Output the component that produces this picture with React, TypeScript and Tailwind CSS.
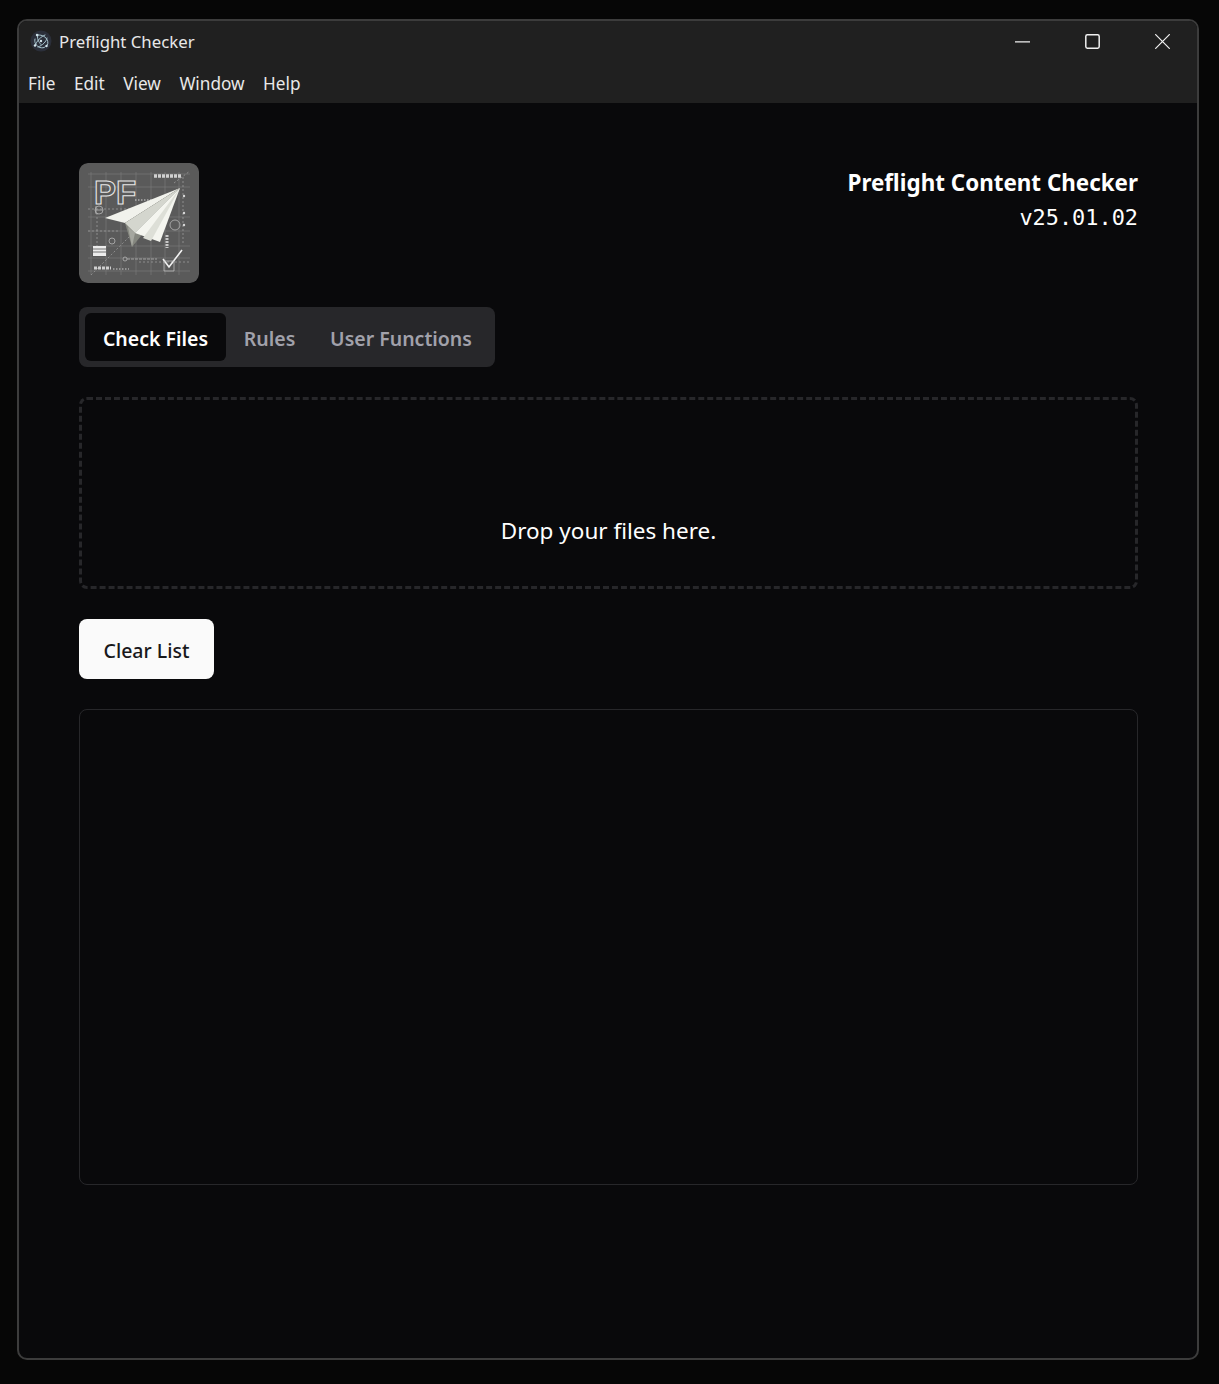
const uiFont = 'font-["Noto_Sans","Open_Sans",sans-serif]';

const menuItems = ['File', 'Edit', 'View', 'Window', 'Help'];

const AppIcon = () => (
    <svg width="22" height="22" viewBox="0 0 22 22" fill="none" className="shrink-0">
        <circle cx="11" cy="11" r="10.5" fill="#2b2f3a" />
        <g stroke="#a9c6d0" strokeWidth="1" strokeLinecap="round" fill="none">
            <path d="M7 5.5C10 4 15 6 17 9.5C18.5 12.5 18 15 16 16.5" />
            <path d="M5 9C4 12.5 6 16 10 17.5C12 18 14 18 15 17" />
            <path d="M8 4.5C6.5 8 8.5 12 11 14.5" />
            <path d="M15 5C11 6.5 6.5 11 5.5 15" />
            <path d="M17 8C16 12 13 15 8 17" />
        </g>
        <circle cx="7" cy="5" r="1.2" fill="#cfe2e8" />
        <circle cx="5" cy="15.5" r="1.2" fill="#cfe2e8" />
        <circle cx="16.5" cy="16" r="1.2" fill="#cfe2e8" />
        <circle cx="11" cy="11" r="1.2" fill="#cfe2e8" />
    </svg>
);

// hand drawn version of the blueprint paper plane logo
const Logo = () => (
    <svg width="120" height="120" viewBox="0 0 120 120" className="shrink-0 rounded-lg">
        <rect width="120" height="120" rx="9" fill="#5a5a5a" />
        <g stroke="#7c7c7c" strokeWidth="0.6">
            <path d="M9 11H111M9 24H111M9 54H111M9 68H111M9 83H111M9 95H111M9 108H111" />
            <path d="M12 9V112M27 9V112M42 9V112M57 9V112M72 9V112M86 9V112M100 9V112" />
        </g>
        <g stroke="#9a9a9a" strokeWidth="0.8" strokeDasharray="2 2">
            <path d="M9 46H60M9 68H40M60 99H111M104 14V80M18 50V88" />
            <path d="M12 112L56 68" />
            <path d="M95 20L111 8" />
        </g>
        <text
            x="15"
            y="41"
            fontFamily="Liberation Sans, sans-serif"
            fontSize="33"
            fontWeight="700"
            fill="#5a5a5a"
            stroke="#e6e6e6"
            strokeWidth="1.1"
        >
            PF
        </text>
        <path d="M56 37H74" stroke="#d5d5d5" strokeWidth="1" strokeDasharray="1.5 1.5" />
        <g fill="none" stroke="#b5b5b5" strokeWidth="0.8">
            <circle cx="20" cy="47" r="4" />
            <circle cx="96" cy="62" r="5" />
            <circle cx="33" cy="78" r="3" />
            <circle cx="46" cy="96" r="2" />
            <path d="M48 96H78" strokeDasharray="3 1" />
            <path d="M17 43V51M16 47H24" />
        </g>
        <path d="M26 55L101 25L46 60Z" fill="#f1f2ec" />
        <path d="M46 60L101 25L53 84Z" fill="#85877f" />
        <path d="M46 60L101 25L56 70Z" fill="#d4d6ce" />
        <path d="M53 84L49 64L56 70Z" fill="#a5a79f" />
        <path d="M56 70L101 25L81 79Z" fill="#f4f5ef" />
        <path d="M64 75L101 25L72 78Z" fill="#dddfd7" />
        <rect x="14" y="83" width="13" height="10" fill="#ededed" />
        <path d="M14 86H27M14 89H27" stroke="#555" strokeWidth="0.8" />
        <path d="M84 96L90 104L103 87" fill="none" stroke="#f2f2f2" strokeWidth="1.6" />
        <path d="M85 98H95V108H85Z" fill="none" stroke="#c5c5c5" strokeWidth="0.7" />
        <path d="M75 13H103" stroke="#d0d0d0" strokeWidth="3.5" strokeDasharray="3 1" />
        <path d="M15 105H32" stroke="#d0d0d0" strokeWidth="3" strokeDasharray="3 1" />
        <path d="M34 106H50" stroke="#a8a8a8" strokeWidth="1.5" strokeDasharray="1.5 1.5" />
        <path d="M88 72V85" stroke="#c8c8c8" strokeWidth="3" strokeDasharray="2 1" />
        <g fill="#d8d8d8">
            <circle cx="105" cy="33" r="1.2" />
            <circle cx="105" cy="50" r="1.2" />
            <circle cx="105" cy="62" r="1.2" />
        </g>
    </svg>
);

const App = () => {
    return (
        <div className={`min-h-[1384px] bg-[#060606] pt-[19px] pr-5 pb-6 pl-[17px] ${uiFont}`}>
            <div className="flex h-[1341px] flex-col overflow-hidden rounded-[10px] border-2 border-[#3c3c3c] bg-[#09090b]">
                {/* Title bar + menu */}
                <header className="h-[82px] shrink-0 bg-[#202020] text-[#e8e8e8]">
                    <div className="flex h-10 items-center pl-[11px]">
                        <AppIcon />
                        <span className="mt-[2px] ml-[7px] text-[16.8px] leading-none">Preflight Checker</span>
                        <div className="ml-auto flex items-center text-[#f0f0f0]">
                            <span className="flex w-[70px] justify-center">
                                <svg width="15" height="15" viewBox="0 0 15 15" fill="none" stroke="currentColor" strokeWidth="1.2">
                                    <path d="M0 7.8H15" />
                                </svg>
                            </span>
                            <span className="flex w-[70px] justify-center">
                                <svg width="15" height="15" viewBox="0 0 15 15" fill="none" stroke="currentColor" strokeWidth="1.5">
                                    <rect x="0.8" y="0.8" width="13.4" height="13.4" rx="1.6" />
                                </svg>
                            </span>
                            <span className="flex w-[70px] justify-center">
                                <svg width="15" height="15" viewBox="0 0 15 15" fill="none" stroke="currentColor" strokeWidth="1.2">
                                    <path d="M0.2 0.2L14.8 14.8M14.8 0.2L0.2 14.8" />
                                </svg>
                            </span>
                        </div>
                    </div>
                    <nav className="flex gap-[18.5px] pt-[4px] pl-[9px] text-[17.2px] leading-[38px]">
                        {menuItems.map((item) => (
                            <span key={item}>{item}</span>
                        ))}
                    </nav>
                </header>

                {/* Content */}
                <main className="flex flex-1 flex-col pt-[60px] pr-[59px] pl-[60px]">
                    <div className="flex items-start justify-between">
                        <Logo />
                        <div className="text-right text-white">
                            <h1 className="mt-[3px] text-[22.4px] leading-[34px] font-bold">Preflight Content Checker</h1>
                            <p className="mt-[1px] font-['DejaVu_Sans_Mono','Liberation_Mono',monospace] text-[21.9px] leading-[34px]">v25.01.02</p>
                        </div>
                    </div>

                    <div className="mt-6 flex h-[60px] w-[416px] items-center rounded-lg bg-[#27272a] p-[6px] text-[19.5px] font-semibold">
                        <button className="flex h-12 w-[141px] items-center justify-center rounded-md bg-[#09090b] pt-[4px] text-white">Check Files</button>
                        <button className="flex h-12 w-[87px] items-center justify-center pt-[4px] text-[#a1a1aa]">Rules</button>
                        <button className="flex h-12 w-[176px] items-center justify-center pt-[4px] text-[#a1a1aa]">User Functions</button>
                    </div>

                    <div className="mt-[30px] flex h-[192px] items-center justify-center rounded-lg border-[3px] border-dashed border-[#27272a] pt-[76px] text-[22.5px] text-white">
                        Drop your files here.
                    </div>

                    <button className="mt-[30px] h-[60px] w-[135px] rounded-lg bg-[#fafafa] pt-[3px] text-[19.5px] font-medium text-[#18181b]">
                        Clear List
                    </button>

                    <div className="mt-[30px] h-[476px] rounded-lg border border-[#27272a]" />
                </main>
            </div>
        </div>
    );
};

export default App;
